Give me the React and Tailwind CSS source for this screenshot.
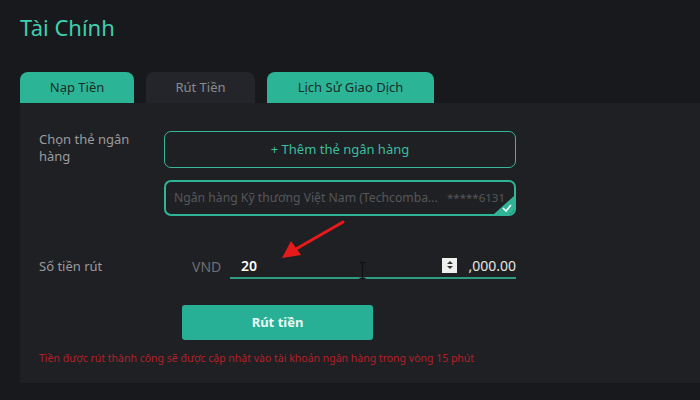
import { useState } from 'react';

const tabs = [
  { label: 'Nạp Tiền', w: 'w-[114px]', active: true },
  { label: 'Rút Tiền', w: 'w-[109px]', active: false },
  { label: 'Lịch Sử Giao Dịch', w: 'w-[167px]', active: true },
];

export default function App() {
  const [amount, setAmount] = useState('20');

  return (
    <div className="relative w-[700px] h-[400px] overflow-hidden bg-[#18191c] font-['Noto_Sans','Open_Sans',sans-serif]">
      <h1 className="pl-[20px] pt-[13px] text-[22px] leading-[28px] text-[#3fcfae]">Tài Chính</h1>

      {/* tabs */}
      <div className="mt-[31px] ml-[20px] flex gap-[12px]">
        {tabs.map((t) => (
          <div
            key={t.label}
            className={`${t.w} h-[31px] rounded-t-[8px] flex items-center justify-center text-[13px] ${
              t.active ? 'bg-[#2bb596] text-[#1d2a27]' : 'bg-[#24252a] text-[#8a8b8f]'
            }`}
          >
            {t.label}
          </div>
        ))}
      </div>

      {/* panel */}
      <div className="ml-[20px] h-[280px] bg-[#1f2023] pt-[28px] pl-[19px]">
        <div className="flex">
          <div className="w-[125px] pr-[20px] text-[13px] leading-[17px] text-[#9b9b9e]">Chọn thẻ ngân hàng</div>
          <div className="w-[352px] flex flex-col gap-[12px]">
            <button className="h-[37px] rounded-[7px] border border-[#38b79a] text-[13px] text-[#3bbf9f]">
              + Thêm thẻ ngân hàng
            </button>
            <div className="relative h-[36px] rounded-[7px] border-2 border-[#2fb495] overflow-hidden flex items-center justify-between gap-[8px] pl-[8px] pr-[9px] text-[12.2px] whitespace-nowrap text-[#56575b]">
              <span>Ngân hàng Kỹ thương Việt Nam (Techcomba...</span>
              <span className="text-[11.5px]">*****6131</span>
              <div className="absolute right-0 bottom-0 w-0 h-0 border-l-[20px] border-l-transparent border-b-[18px] border-b-[#2fb495]" />
              <svg className="absolute right-[2px] bottom-[2px]" width="10" height="8" viewBox="0 0 10 8">
                <path d="M1 4 L4 7 L9 1" fill="none" stroke="#ffffff" strokeWidth="1.6" />
              </svg>
            </div>
          </div>
        </div>

        {/* amount */}
        <div className="mt-[35px] flex items-center h-[28px]">
          <div className="w-[153px] pt-[3px] text-[13px] text-[#9b9b9e]">Số tiền rút</div>
          <div className="w-[38px] pt-[3px] text-[14px] text-[#6e6f73]">VND</div>
          <div className="w-[286px] h-[28px] border-b-2 border-[#2e9b82] flex items-center pl-[11px] pt-[2px]">
            <input
              value={amount}
              onChange={(e) => setAmount(e.target.value)}
              className="w-[190px] bg-transparent outline-none text-[14px] font-semibold text-white"
            />
            <div className="ml-[11px] w-[15px] h-[15px] bg-[#f0f0f0] flex flex-col items-center justify-center gap-[2px]">
              <div className="w-0 h-0 border-x-[3px] border-x-transparent border-b-[3px] border-b-[#333]" />
              <div className="w-0 h-0 border-x-[3px] border-x-transparent border-t-[3px] border-t-[#333]" />
            </div>
            <span className="ml-auto text-[14px] text-[#e6e6e6]">,000.00</span>
          </div>
        </div>

        <div className="mt-[26px] pl-[143px]">
          <button className="w-[191px] h-[35px] rounded-[3px] bg-[#27b096] text-[13px] font-bold text-[#eaf7f3]">
            Rút tiền
          </button>
        </div>

        <p className="mt-[11px] text-[10.5px] text-[#b3212b]">
          Tiền được rút thành công sẽ được cập nhật vào tài khoản ngân hàng trong vòng 15 phút
        </p>
      </div>

      {/* red annotation arrow */}
      <svg className="absolute left-0 top-0 pointer-events-none" width="700" height="400">
        <line x1="343" y1="222" x2="296" y2="249" stroke="#e8191b" strokeWidth="3" strokeLinecap="round" />
        <polygon points="282,258 291,241 301,255" fill="#e8191b" />
      </svg>

      {/* text cursor */}
      <svg className="absolute left-[359px] top-[262px] pointer-events-none" width="7" height="17" viewBox="0 0 7 17">
        <path d="M0.5 0.5 H6.5 M3.5 0.5 V16.5 M0.5 16.5 H6.5" stroke="#111" strokeWidth="1.3" fill="none" />
      </svg>
    </div>
  );
}
